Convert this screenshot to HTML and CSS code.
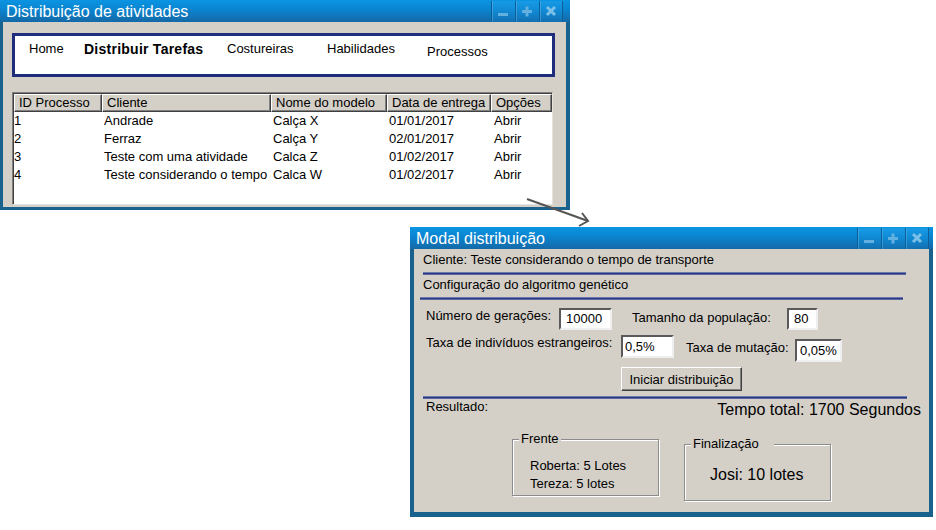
FILE: index.html
```html
<!DOCTYPE html>
<html lang="pt">
<head>
<meta charset="utf-8">
<title>Distribuição de atividades</title>
<link rel="stylesheet" href="styles.css">
</head>
<body>
<div class="desktop">
  <section class="win win-main">
    <header class="titlebar">
      <span class="title">Distribuição de atividades</span>
      <div class="controls controls-main">
        <span class="ctl"><svg width="24" height="21" viewBox="0 0 24 21"><rect x="7" y="12" width="10" height="3" fill="#62b0e0"/></svg></span>
        <span class="ctl"><svg width="24" height="21" viewBox="0 0 24 21"><rect x="7" y="9" width="10" height="3" fill="#62b0e0"/><rect x="10.5" y="5.5" width="3" height="10" fill="#62b0e0"/></svg></span>
        <span class="ctl"><svg width="24" height="21" viewBox="0 0 24 21"><path d="M8 6 L16 14 M16 6 L8 14" stroke="#7cc0e8" stroke-width="3"/></svg></span>
      </div>
    </header>
    <div class="win-body main-body">
      <nav class="menu">
        <span class="mi">Home</span>
        <span class="mi mi-active">Distribuir Tarefas</span>
        <span class="mi">Costureiras</span>
        <span class="mi">Habilidades</span>
        <span class="mi mi-low">Processos</span>
      </nav>
      <div class="grid">
        <div class="grow ghead">
          <span class="gh c1">ID Processo</span>
          <span class="gh c2">Cliente</span>
          <span class="gh c3">Nome do modelo</span>
          <span class="gh c4">Data de entrega</span>
          <span class="gh c5">Opções</span>
        </div>
        <div class="grow">
          <span class="gd c1 first">1</span><span class="gd c2">Andrade</span><span class="gd c3">Calça X</span><span class="gd c4">01/01/2017</span><span class="gd c5">Abrir</span>
        </div>
        <div class="grow">
          <span class="gd c1 first">2</span><span class="gd c2">Ferraz</span><span class="gd c3">Calça Y</span><span class="gd c4">02/01/2017</span><span class="gd c5">Abrir</span>
        </div>
        <div class="grow">
          <span class="gd c1 first">3</span><span class="gd c2">Teste com uma atividade</span><span class="gd c3">Calca Z</span><span class="gd c4">01/02/2017</span><span class="gd c5">Abrir</span>
        </div>
        <div class="grow">
          <span class="gd c1 first">4</span><span class="gd c2">Teste considerando o tempo</span><span class="gd c3">Calca W</span><span class="gd c4">01/02/2017</span><span class="gd c5">Abrir</span>
        </div>
      </div>
    </div>
  </section>

  <svg class="arrow" width="80" height="40" viewBox="0 0 80 40">
    <path d="M7 7 L68 29" stroke="#555" stroke-width="2" fill="none"/>
    <path d="M59 34 L68 29 L62 21" stroke="#555" stroke-width="2" fill="none"/>
  </svg>

  <section class="win win-modal">
    <header class="titlebar">
      <span class="title">Modal distribuição</span>
      <div class="controls controls-modal">
        <span class="ctl"><svg width="24" height="21" viewBox="0 0 24 21"><rect x="7" y="12" width="10" height="3" fill="#62b0e0"/></svg></span>
        <span class="ctl"><svg width="24" height="21" viewBox="0 0 24 21"><rect x="7" y="9" width="10" height="3" fill="#62b0e0"/><rect x="10.5" y="5.5" width="3" height="10" fill="#62b0e0"/></svg></span>
        <span class="ctl"><svg width="24" height="21" viewBox="0 0 24 21"><path d="M8 6 L16 14 M16 6 L8 14" stroke="#7cc0e8" stroke-width="3"/></svg></span>
      </div>
    </header>
    <div class="win-body modal-body">
      <div class="m-line m-client">Cliente: Teste considerando o tempo de transporte</div>
      <div class="sep sep1"></div>
      <div class="m-line m-config">Configuração do algoritmo genético</div>
      <div class="sep sep2"></div>

      <div class="frow frow1">
        <span class="lbl lbl1">Número de gerações:</span>
        <span class="field f1">10000</span>
        <span class="lbl lbl2">Tamanho da população:</span>
        <span class="field f2">80</span>
      </div>
      <div class="frow frow2">
        <span class="lbl lbl3">Taxa de indivíduos estrangeiros:</span>
        <span class="field f3">0,5%</span>
        <span class="lbl lbl4">Taxa de mutação:</span>
        <span class="field f4">0,05%</span>
      </div>
      <button class="btn" type="button">Iniciar distribuição</button>
      <div class="sep sep3"></div>

      <div class="result-row">
        <span class="res-label">Resultado:</span>
        <span class="res-total">Tempo total: 1700 Segundos</span>
      </div>

      <div class="groups">
        <div class="group g-front">
          <span class="legend">Frente</span>
          <div class="g-line">Roberta: 5 Lotes</div>
          <div class="g-line">Tereza: 5 lotes</div>
        </div>
        <div class="group g-final">
          <span class="legend legend-wide">Finalização</span>
          <div class="g-big">Josi: 10 lotes</div>
        </div>
      </div>
    </div>
  </section>
</div>
</body>
</html>
```

FILE: styles.css
```css
* { box-sizing: border-box; }

html, body {
  margin: 0;
  padding: 0;
  background: #ffffff;
}

body {
  font-family: "Liberation Sans", Arial, sans-serif;
  font-size: 13px;
  color: #000;
}

.desktop {
  position: relative;
  width: 936px;
  height: 530px;
  overflow: hidden;
}

/* ---------- window chrome ---------- */
.win {
  position: absolute;
  display: flex;
  flex-direction: column;
  background: #19628e;
}

.win-main {
  left: 0;
  top: 0;
  width: 570px;
  height: 210px;
  padding: 0 4px 3px 3px;
}

.win-modal {
  left: 410px;
  top: 227px;
  width: 523px;
  height: 290px;
  padding: 0 4px 5px 4px;
}

.titlebar {
  height: 22px;
  flex: none;
  display: flex;
  align-items: stretch;
  justify-content: space-between;
  background: linear-gradient(#0b94e2 0%, #0a86d2 40%, #1469a6 100%);
  color: #fff;
}

.win-main .titlebar { margin: 0 -4px 0 -3px; padding-left: 6px; }
.win-modal .titlebar { margin: 0 -4px 0 -4px; padding-left: 6px; }

.title {
  font-size: 16px;
  line-height: 22px;
  padding-top: 1px;
  white-space: nowrap;
}

.controls {
  display: flex;
  padding-top: 1px;
}
.controls-main { margin-right: 7px; }
.controls-modal { margin-right: 4px; }

.ctl {
  width: 24px;
  height: 21px;
  display: block;
  background: linear-gradient(#179be6 0%, #1088d2 50%, #136fb0 100%);
  border-left: 1px solid #0e5f98;
  box-shadow: inset 1px 0 0 rgba(120, 200, 245, 0.35);
}
.ctl:last-child { border-right: 1px solid #0e5f98; }
.ctl svg { display: block; margin-left: -1px; }

.win-body {
  flex: 1;
  background: #d4d0c8;
}

/* ---------- main window ---------- */
.main-body {
  padding: 11px 11px 0 9px;
  display: flex;
  flex-direction: column;
}

.menu {
  height: 44px;
  border: 3px solid #1f2d7c;
  background: #fff;
  display: grid;
  grid-template-columns: 55px 143px 100px 100px auto;
  align-items: start;
  padding: 5px 0 0 14px;
  white-space: nowrap;
}

.mi {
  font-size: 13px;
  line-height: 16px;
}
.mi-active {
  font-weight: bold;
  font-size: 14px;
  letter-spacing: 0.25px;
}
.mi-low { margin-top: 3px; }

.grid {
  margin-top: 15px;
  width: 541px;
  height: 113px;
  background: #fff;
  border-style: solid;
  border-width: 1px;
  border-color: #808080 #e4e2dc #e4e2dc #808080;
  box-shadow: inset 1px 1px 0 #404040;
  padding: 1px 0 0 1px;
  display: flex;
  flex-direction: column;
}

.grow {
  display: flex;
  height: 18px;
  line-height: 18px;
  white-space: nowrap;
}

.ghead {
  height: 18px;
  line-height: 16px;
}

.gh {
  background: #d4d0c8;
  border-style: solid;
  border-width: 1px;
  border-color: #fff #404040 #404040 #fff;
  box-shadow: inset -1px -1px 0 #808080;
  padding-left: 4px;
}

.gd {
  padding-left: 2px;
  overflow: hidden;
}
.gd.first { padding-left: 0; }

.c1 { width: 88px; }
.c2 { width: 169px; }
.c3 { width: 116px; }
.c4 { width: 104px; }
.c5 { width: 61px; }
.gd.c5 { padding-left: 3px; }

/* ---------- arrow ---------- */
.arrow {
  position: absolute;
  left: 520px;
  top: 192px;
}

/* ---------- modal ---------- */
.modal-body {
  padding-top: 3px;
  display: flex;
  flex-direction: column;
  align-items: flex-start;
}

.m-line {
  line-height: 16px;
  padding-left: 9px;
  white-space: nowrap;
}
.m-config { margin-top: 2px; }

.sep {
  height: 3px;
  background: #2a3982;
  border-top: 1px solid #6d79ae;
  border-bottom: 1px solid #5a67a3;
}
.sep1 { margin: 4px 0 0 9px; width: 483px; }
.sep2 { margin: 4px 0 0 6px; width: 483px; }
.sep3 { margin: 5px 0 0 9px; width: 484px; }

.frow {
  display: flex;
  align-items: flex-start;
  padding-left: 12px;
  white-space: nowrap;
}
.frow1 { margin-top: 8px; }
.frow2 { margin-top: 5px; }

.lbl { line-height: 16px; }
.lbl1 { width: 133px; }
.lbl2 { width: 155px; margin-left: 20px; margin-top: 2px; }
.lbl3 { width: 195px; }
.lbl4 { width: 109px; margin-left: 12px; margin-top: 5px; }

.field {
  display: block;
  height: 22px;
  line-height: 18px;
  background: #fff;
  border-style: solid;
  border-width: 2px;
  border-color: #5a5a5a #efefef #efefef #5a5a5a;
  padding-left: 5px;
}
.f1 { width: 53px; }
.f2 { width: 31px; }
.f3 { width: 53px; height: 23px; padding-left: 2px; line-height: 19px; }
.f4 { width: 47px; height: 23px; margin-top: 4px; padding-left: 3px; line-height: 19px; }

.btn {
  margin: 5px 0 0 207px;
  width: 121px;
  height: 24px;
  padding: 0;
  font-family: "Liberation Sans", Arial, sans-serif;
  font-size: 13px;
  color: #000;
  background: #d4d0c8;
  border-style: solid;
  border-width: 1px;
  border-color: #fff #404040 #404040 #fff;
  box-shadow: inset -1px -1px 0 #808080;
}

.result-row {
  display: flex;
  align-items: flex-start;
  align-self: stretch;
  white-space: nowrap;
}
.res-label {
  line-height: 16px;
  margin-left: 12px;
}
.res-total {
  font-size: 16px;
  line-height: 18px;
  margin: 2px 8px 0 auto;
}

.groups {
  display: flex;
  align-items: flex-start;
  margin: 20px 0 0 98px;
}

.group {
  position: relative;
  border: 1px solid #8c8c8c;
  box-shadow: 1px 1px 0 #fff, inset 1px 1px 0 #fff;
}

.g-front {
  width: 147px;
  height: 57px;
  padding: 17px 0 0 17px;
}
.g-final {
  width: 147px;
  height: 57px;
  margin: 5px 0 0 25px;
  padding: 21px 0 0 25px;
}

.legend {
  position: absolute;
  left: 6px;
  top: -9px;
  line-height: 16px;
  padding: 0 2px;
  background: #d4d0c8;
  white-space: nowrap;
}
.legend-wide { padding-right: 15px; }

.g-line {
  line-height: 17.5px;
  white-space: nowrap;
}
.g-big {
  font-size: 16px;
  line-height: 18px;
  white-space: nowrap;
}
```
